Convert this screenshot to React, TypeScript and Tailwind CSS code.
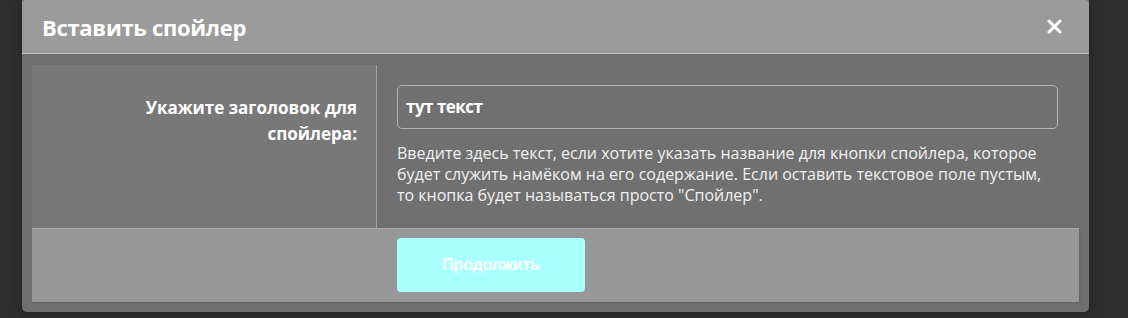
import React from 'react';

export default function App() {
  return (
    <div className="h-[318px] w-full bg-[#2f2f2f] pl-[22px] font-['Open_Sans',sans-serif]">
      <div className="flex h-[312px] w-[1067px] flex-col rounded-b-[5px] bg-[#707070] shadow-[0_0_12px_rgba(0,0,0,0.35)]">
        <div className="flex h-[54px] items-center justify-between rounded-t-[4px] border-b border-[#c2c2c2] bg-[#9b9b9b] pl-[20px] pr-[27px]">
          <h1 className="text-[22px] font-bold leading-[30px] tracking-[-0.3px] text-white">Вставить спойлер</h1>
          <button aria-label="Закрыть" className="flex h-[16px] w-[16px] items-center justify-center">
            <svg width="15" height="15" viewBox="0 0 15 15">
              <path d="M2 2 L13 13 M13 2 L2 13" stroke="#ffffff" strokeWidth="3" strokeLinecap="round" />
            </svg>
          </button>
        </div>

        <div className="mx-[10px] mt-[11px] flex h-[163px]">
          <div className="w-[345px] border-r border-[#a3a3a3] bg-[#787878] pr-[19px] pt-[30px] text-right">
            <label className="text-[17px] font-bold leading-[26px] text-white">
              Укажите заголовок для
              <br />
              спойлера:
            </label>
          </div>
          <div className="flex-1 pl-[20px] pr-[21px] pt-[20px]">
            <div className="flex h-[44px] items-center rounded-[5px] border border-[#b4b4b4] px-[8px]">
              <span className="text-[17px] font-bold tracking-[-0.5px] text-white">тут текст</span>
            </div>
            <p className="mt-[14px] text-[16px] leading-[21px] text-[#f0f0f0]">
              Введите здесь текст, если хотите указать название для кнопки спойлера, которое
              <br />
              будет служить намёком на его содержание. Если оставить текстовое поле пустым,
              <br />
              то кнопка будет называться просто "Спойлер".
            </p>
          </div>
        </div>

        <div className="mx-[10px] flex h-[74px] border-t border-[#a8a8a8] bg-[#979797] pl-[365px] pt-[9px] shadow-[1px_1px_2px_rgba(0,0,0,0.15)]">
          <button className="flex h-[54px] w-[188px] items-center justify-center rounded-[4px] bg-[#aaffff] font-['Liberation_Sans',sans-serif] text-[16px] font-bold tracking-[-0.2px] text-white">
            Продолжить
          </button>
        </div>
      </div>
    </div>
  );
}
